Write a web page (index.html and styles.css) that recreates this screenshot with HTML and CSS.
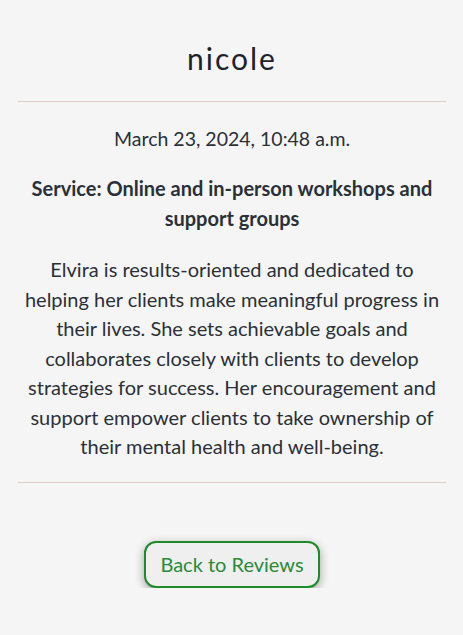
FILE: index.html
```html
<!DOCTYPE html>
<html lang="en">
<head>
<meta charset="utf-8">
<title>Review - nicole</title>
<link rel="stylesheet" href="styles.css">
</head>
<body>
<main class="review">
  <h1 class="review-author">nicole</h1>
  <hr class="divider">
  <p class="review-date">March 23, 2024, 10:48 a.m.</p>
  <p class="review-service">Service: Online and in-person workshops and support groups</p>
  <p class="review-text">Elvira is results-oriented and dedicated to helping her clients make meaningful progress in their lives. She sets achievable goals and collaborates closely with clients to develop strategies for success. Her encouragement and support empower clients to take ownership of their mental health and well-being.</p>
  <hr class="divider">
  <div class="actions">
    <a class="back-btn" href="#">Back to Reviews</a>
  </div>
</main>
</body>
</html>
```
FILE: styles.css
```css
html, body {
  margin: 0;
  padding: 0;
  background: #f5f5f5;
}
body {
  font-family: Lato, "Open Sans", "Liberation Sans", sans-serif;
  color: #2b3038;
}
.review {
  padding: 40px 17px 0 18px;
  text-align: center;
}
.review-author {
  margin: 0;
  font-size: 30px;
  line-height: 36px;
  font-weight: 400;
  letter-spacing: 2px;
  color: #1c232c;
}
.divider {
  margin: 25px 0 0;
  border: 0;
  border-top: 1px solid #d9cec7;
  height: 0;
}
.review-date {
  margin: 23px 0 0;
  font-size: 19.5px;
  line-height: 28px;
}
.review-service {
  margin: 20px 0 0;
  font-size: 20px;
  font-weight: 700;
  line-height: 30px;
  padding: 0 8px;
}
.review-text {
  margin: 22px 0 0;
  font-size: 20px;
  line-height: 29.5px;
  padding: 0 4px;
}
.review-text + .divider {
  margin-top: 20px;
}
.actions {
  display: flex;
  justify-content: center;
  padding-top: 58px;
}
.back-btn {
  display: inline-flex;
  align-items: center;
  justify-content: center;
  width: 176px;
  height: 47px;
  box-sizing: border-box;
  border: 2px solid #1e8a2a;
  border-radius: 12px;
  background: #efefef;
  color: #2a8a37;
  font-size: 20px;
  text-decoration: none;
  box-shadow: 0 3px 10px rgba(0, 0, 0, 0.35);
}
```
